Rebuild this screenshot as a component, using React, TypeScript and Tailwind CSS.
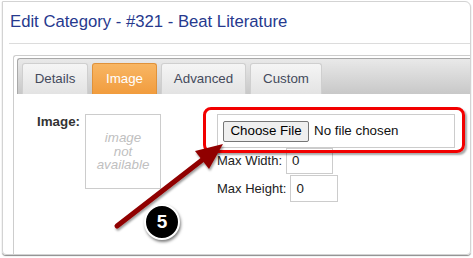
import React from "react";

const tabs = [
  { label: "Details", w: "w-[66px]", active: false },
  { label: "Image", w: "w-[65px]", active: true },
  { label: "Advanced", w: "w-[85px]", active: false },
  { label: "Custom", w: "w-[72px]", active: false },
];

function Tab({ label, w, active }: { label: string; w: string; active: boolean }) {
  return (
    <div
      className={
        active
          ? `${w} h-[31px] flex items-center justify-center rounded-t-[3px] border border-b-0 border-[#e0923a] bg-gradient-to-b from-[#f8b663] to-[#f19c3d] text-white text-[13.33px]`
          : `${w} h-[31px] flex items-center justify-center rounded-t-[3px] border border-b-0 border-[#cfcfcf] bg-gradient-to-b from-[#f5f5f5] to-[#e3e3e3] text-[#444a5c] text-[13.33px]`
      }
    >
      {label}
    </div>
  );
}

export default function App() {
  return (
    <div className="relative w-[473px] h-[258px] overflow-hidden bg-white font-['Liberation_Sans',Arial,sans-serif]">
      {/* card */}
      <div className="ml-[2px] mt-[1px] w-[469px] h-[254px] flex flex-col border border-[#d3d3d3] rounded-tr-[6px] rounded-b-[4px] shadow-[0_1px_1px_#8a8a8a]">
        <div className="ml-[6px] h-[42px] border-b border-[#dcdcdc] pl-[1px] pt-[9px] text-[16.7px] leading-[21px] text-[#26398e]">
          Edit Category - #321 - Beat Literature
        </div>

        {/* inner panel */}
        <div className="ml-[10px] mt-[11px] flex-1 flex flex-col border-l border-t border-[#cdcdcd] rounded-tl-[3px]">
          {/* tab bar */}
          <div className="ml-[3px] mt-[2px] h-[36px] flex items-end gap-[4px] pl-[4px] border-t border-l border-[#a9a9a9] rounded-tl-[3px] bg-gradient-to-b from-[#e9e9e9] to-[#c8c8c8]">
            {tabs.map((t) => (
              <Tab key={t.label} {...t} />
            ))}
          </div>

          {/* content */}
          <div className="flex pt-[20px]">
            <div className="w-[66px] text-right text-[13.33px] leading-[16px] font-bold text-[#333]">Image:</div>
            <div className="ml-[5px] w-[76px] h-[75px] border border-[#cccccc] flex flex-col items-center justify-center text-[13.33px] leading-[13.5px] italic text-[#c0c0c0]">
              <span>image</span>
              <span>not</span>
              <span>available</span>
            </div>
            <div className="ml-[56px] flex flex-col text-[13px] text-[#222]">
              <div className="w-[238px] h-[34px] border border-[#cccccc] flex items-center pl-[5px]">
                <div className="w-[86px] h-[21px] flex items-center justify-center bg-[#efefef] border border-[#767676] rounded-[2px] text-[13.33px] text-black">
                  Choose File
                </div>
                <span className="ml-[5px] text-[13.33px] text-[#111]">No file chosen</span>
              </div>
              <div className="flex items-center">
                <span>Max Width:</span>
                <div className="ml-[4px] w-[47px] h-[26px] border border-[#cccccc] flex items-center pl-[5px] text-[13.33px]">0</div>
              </div>
              <div className="mt-[1px] flex items-center">
                <span>Max Height:</span>
                <div className="ml-[4px] w-[48px] h-[27px] border border-[#cccccc] flex items-center pl-[5px] text-[13.33px]">0</div>
              </div>
            </div>
          </div>
        </div>
      </div>

      {/* annotation: red highlight */}
      <div className="absolute left-[203px] top-[107px] w-[262px] h-[46px] border-[3px] border-[#f20000] rounded-[8px] shadow-[2px_2px_2px_rgba(0,0,0,0.35)]" />

      {/* annotation: arrow */}
      <svg className="absolute left-0 top-0" width="473" height="258">
        <defs>
          <filter id="sh" x="-20%" y="-20%" width="140%" height="140%">
            <feDropShadow dx="1" dy="2" stdDeviation="1.2" floodColor="#000" floodOpacity="0.4" />
          </filter>
        </defs>
        <g filter="url(#sh)">
          <line x1="117" y1="226" x2="206" y2="157" stroke="#900000" strokeWidth="5" strokeLinecap="round" />
          <polygon points="223,144 195,151 209,169" fill="#900000" />
        </g>
      </svg>

      {/* annotation: step number */}
      <div className="absolute left-[144px] top-[204px] w-[36px] h-[36px] rounded-full bg-black border-2 border-white shadow-[1px_2px_3px_rgba(0,0,0,0.5)] flex items-center justify-center text-white font-bold text-[19px]">
        5
      </div>
    </div>
  );
}
